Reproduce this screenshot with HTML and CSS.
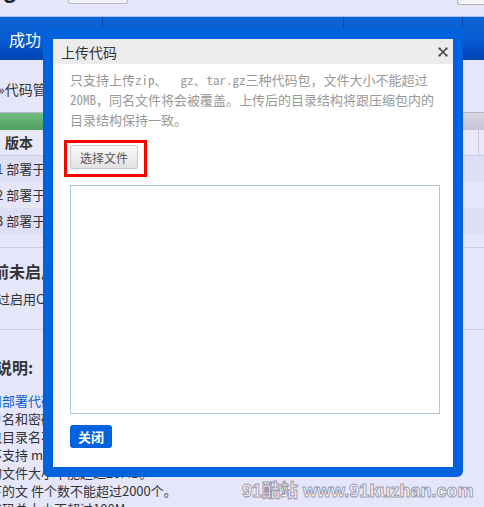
FILE: index.html
```html
<!DOCTYPE html>
<html>
<head>
    <title>上传代码</title>
    <link rel="stylesheet" href="styles.css">
</head>
<body>

    <div class="topbar">
        <div class="logo">Engine</div>
        <div class="top-btn"></div>
        <div class="top-search"></div>
    </div>
    <div class="nav">
        <div class="nav-tabs">
            <span class="tab tab-1"></span>
            <span class="tab tab-2"></span>
            <span class="tab tab-3"></span>
        </div>
        <div class="nav-title">成功</div>
    </div>

    <div class="main">
        <div class="crumb">»代码管理</div>

        <div class="table">
            <div class="table-bar"><div class="progress"></div></div>
            <div class="thead">
                <span class="th">版本</span>
                <span class="th"></span>
            </div>
            <div class="row row-dark">1 部署于 2013-05-20 14:32</div>
            <div class="row">2 部署于 2013-05-18 09:10</div>
            <div class="row row-dark">3 部署于 2013-05-16 17:45</div>
        </div>

        <div class="section">
            <h3>当前未启用CDN加速</h3>
            <p>通过启用CDN加速，可以提升静态文件的访问速度。</p>
        </div>

        <div class="section section-last">
            <h3 class="notes-title">使用说明:</h3>
            <ul class="notes">
                <li class="link">请使用部署代码功能上传应用代码包。</li>
                <li>需用户名和密码验证，与平台账号一致。</li>
                <li>压缩包目录名不能包含中文及特殊字符。</li>
                <li>目前不支持 mysql 数据库文件导入。</li>
                <li>上传的文件大小不能超过20MB。</li>
                <li>目录下的文 件个数不能超过2000个。</li>
                <li>上传代码总大小不超过100M。</li>
            </ul>
        </div>
    </div>

    <!-- upload dialog -->
    <div class="modal">
        <div class="modal-head">
            <span>上传代码</span>
            <svg class="close" width="10" height="10" viewBox="0 0 10 10">
                <path d="M1.5 1.5 L8.5 8.5 M8.5 1.5 L1.5 8.5" stroke="#444" stroke-width="1.6"/>
                <rect x="0.5" y="0.5" width="2" height="2" fill="#444"/>
                <rect x="7.5" y="0.5" width="2" height="2" fill="#444"/>
                <rect x="0.5" y="7.5" width="2" height="2" fill="#444"/>
                <rect x="7.5" y="7.5" width="2" height="2" fill="#444"/>
            </svg>
        </div>
        <div class="modal-body">
            <div class="desc">
                只支持上传zip、&nbsp;&nbsp;gz、tar.gz三种代码包，文件大小不能超过<br>
                20MB，同名文件将会被覆盖。上传后的目录结构将跟压缩包内的<br>
                目录结构保持一致。
            </div>
            <div class="pick">
                <button class="pick-btn" type="button">选择文件</button>
            </div>
            <textarea class="file-list"></textarea>
            <button class="close-btn" type="button">关闭</button>
        </div>
    </div>

    <div class="watermark">91酷站 www.91kuzhan.com</div>

</body>
</html>
```

FILE: styles.css
```css
body {
    font-family: "Noto Sans CJK SC", sans-serif;
    margin: 0;
    padding: 0;
    width: 484px;
    height: 507px;
    overflow: hidden;
    position: relative;
    background-color: #e6e6fa;
    color: #333;
}

/* top strip */
.topbar {
    height: 16px;
    border-bottom: 1px solid #a8c0ee;
    display: flex;
    align-items: flex-start;
    overflow: hidden;
}

.logo {
    font-family: "Liberation Sans", sans-serif;
    font-weight: bold;
    font-size: 24px;
    line-height: 24px;
    color: #223;
    margin: -22px 0 0 -28px;
}

.top-btn {
    width: 58px;
    height: 3px;
    margin-left: 16px;
    border: 1px solid #b8b8c8;
    border-top: none;
    border-radius: 0 0 3px 3px;
    background-color: #f4f4f8;
}

.top-search {
    width: 26px;
    height: 4px;
    margin-left: auto;
    border: 1px solid #b0b0c0;
    border-top: none;
    border-right: none;
    border-radius: 0 0 0 3px;
    background-color: #f6f6fa;
}

/* blue nav */
.nav {
    height: 43px;
    background: linear-gradient(#0d65d6, #0758d0 60%, #0041b0);
}

.nav-tabs {
    height: 11px;
    display: flex;
}

.tab {
    border-right: 1px solid #0a4aa8;
}

.tab-1 { width: 102px; }
.tab-2 { width: 240px; }
.tab-3 { width: 118px; }

.nav-title {
    color: #fff;
    font-size: 16px;
    line-height: 22px;
    padding: 0 0 0 9px;
}

/* page body, shifted left like a scrolled page */
.main {
    margin-left: -26px;
    width: 510px;
}

.crumb {
    height: 52px;
    box-sizing: border-box;
    padding: 19px 0 0 24px;
    font-size: 14px;
    line-height: 20px;
}

.table-bar {
    height: 17px;
    border-top: 1px solid #b4b4c6;
    background: linear-gradient(#d8d8e4, #c4c4d4);
}

.progress {
    width: 300px;
    height: 100%;
    background: linear-gradient(#72bb80, #4f9f5e);
}

.thead {
    height: 25px;
    display: grid;
    grid-template-columns: 505px 1fr;
    border-bottom: 1px solid #c8c8dc;
    background-color: #e8e8f8;
}

.th {
    font-size: 14px;
    font-weight: bold;
    line-height: 25px;
    padding-left: 31px;
    border-right: 1px solid #c8c8dc;
}

.row {
    height: 26px;
    line-height: 26px;
    font-size: 13px;
    padding-left: 22px;
    white-space: nowrap;
}

.row-dark {
    background-color: #dedef4;
}

.section {
    margin-top: 13px;
    border-top: 1px solid #cdcde0;
    padding: 12px 0 20px 0;
}

.section h3 {
    margin: 0 0 7px 3px;
    font-size: 16px;
    line-height: 22px;
}

.section p {
    margin: 0 0 0 10px;
    font-size: 13px;
    line-height: 20px;
}

.section-last {
    margin-top: 0;
    padding-top: 26px;
}

.section h3.notes-title {
    margin: 0 0 14px -10px;
}

.notes {
    list-style: none;
    margin: 0 0 0 -11px;
    padding: 0;
    font-size: 13px;
    line-height: 18px;
    white-space: nowrap;
}

.link {
    color: #0b5fd0;
}

/* dialog */
.modal {
    position: absolute;
    left: 43px;
    top: 29px;
    width: 400px;
    border: 10px solid #0062dc;
    border-radius: 0 0 6px 6px;
    background-color: #fff;
}

.modal-head {
    height: 25px;
    background-color: #ececec;
    display: flex;
    align-items: center;
    justify-content: space-between;
    padding: 0 5px 0 8px;
    font-size: 14px;
    color: #333;
}

.modal-body {
    padding: 6px 13px 19px 17px;
}

.desc {
    font-family: "Noto Sans Mono CJK SC", "Noto Sans CJK SC", monospace;
    font-size: 13px;
    line-height: 20px;
    color: #999;
    white-space: nowrap;
}

.pick {
    display: flex;
    width: max-content;
    margin: 10px 0 0 -6px;
    border: 3px solid #f00;
    padding: 2px 6px 5px 3px;
}

.pick-btn {
    width: 68px;
    height: 24px;
    border: 1px solid #c8c8c8;
    border-radius: 2px;
    background: linear-gradient(#fafafa, #e2e2e2);
    font-family: "Noto Sans CJK SC", sans-serif;
    font-size: 12px;
    color: #555;
    padding: 0;
}

.file-list {
    display: block;
    width: 370px;
    height: 229px;
    margin-top: 8px;
    box-sizing: border-box;
    border: 1px solid #a9c5de;
    resize: none;
}

.close-btn {
    display: block;
    margin-top: 11px;
    width: 42px;
    height: 23px;
    border: none;
    border-radius: 3px;
    background-color: #0062dc;
    color: #fff;
    font-family: "Noto Sans CJK SC", sans-serif;
    font-size: 13px;
    font-weight: bold;
    padding: 0;
}

.watermark {
    position: absolute;
    left: 242px;
    top: 476px;
    font-family: "Liberation Sans", "Noto Sans CJK SC", sans-serif;
    font-size: 18px;
    font-weight: bold;
    color: #fff;
    -webkit-text-stroke: 1px #9a9aae;
    white-space: nowrap;
}
```
